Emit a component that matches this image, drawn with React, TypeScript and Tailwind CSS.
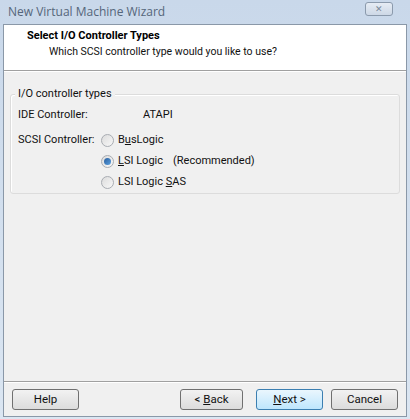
export default function App() {
  const title = { fontFamily: '"Open Sans", "Noto Sans", sans-serif' };
  const body = { fontFamily: 'Roboto, "Noto Sans", sans-serif' };

  const Radio = ({ checked }: { checked?: boolean }) => (
    <span className="relative inline-flex h-[13px] w-[13px] items-center justify-center rounded-full border border-[#a8acb2] bg-gradient-to-br from-[#dcdcdc] to-[#f8f8f8]">
      {checked && <span className="h-[7px] w-[7px] rounded-full bg-gradient-to-br from-[#2a5f9e] to-[#5aa0e0]" />}
    </span>
  );

  const Btn = ({ children, w, primary }: { children: React.ReactNode; w: string; primary?: boolean }) => (
    <button
      className={`${w} h-[21px] rounded-[3px] border text-[11.5px] text-[#111] ${
        primary
          ? "border-[#3c7fb1] bg-gradient-to-b from-[#eaf6fd] to-[#bee6fd]"
          : "border-[#707070] bg-gradient-to-b from-[#f2f2f2] to-[#dcdcdc]"
      }`}
    >
      {children}
    </button>
  );

  return (
    <div className="h-[419px] w-[410px] overflow-hidden bg-[#6f9cc0]">
      <div className="flex h-[419px] w-[410px] flex-col bg-gradient-to-b from-[#c9d8ea] to-[#dbe6f2] px-[3px] pb-[2px]">
        <div className="flex h-[24px] items-center justify-between pl-[5px] pr-[14px]" style={title}>
          <span className="text-[12px] text-[#55667a]">New Virtual Machine Wizard</span>
          <span className="mt-[-6px] flex h-[14px] w-[28px] items-center justify-center rounded-[3px] border border-[#8b9aac] bg-gradient-to-b from-[#e6ecf4] to-[#cdd8e6] text-[9px] text-[#7a8898]">
            ✕
          </span>
        </div>
        <div className="flex flex-1 flex-col border border-[#8a98a8] bg-[#f0f0f0]" style={body}>
          <div className="h-[46px] border-b border-[#a0a0a0] bg-white pl-[23px] pt-[3px]">
            <div className="text-[11px] font-bold leading-[16px] text-[#000]">Select I/O Controller Types</div>
            <div className="pl-[22px] text-[10.5px] leading-[16px] text-[#111]">Which SCSI controller type would you like to use?</div>
          </div>
          <div className="border-t border-white px-[6px] pt-[22px]">
            <div className="relative h-[100px] rounded-[3px] border border-[#dcdcdc] shadow-[inset_1px_1px_0_#fff]">
              <div className="absolute left-[4px] top-[-9px] bg-[#f0f0f0] px-[3px] text-[11px] text-[#111]">I/O controller types</div>
              <div className="pl-[7px] pt-[11px] text-[11px] text-[#111]">
                <div className="flex h-[18px] items-center">
                  <span className="w-[125px]">IDE Controller:</span>
                  <span>ATAPI</span>
                </div>
                <div className="mt-[6px] flex">
                  <span className="w-[83px] whitespace-nowrap leading-[20px]">SCSI Controller:</span>
                  <div className="flex flex-col gap-[1px] whitespace-nowrap">
                    <label className="flex h-[20px] items-center gap-[4px]">
                      <Radio />
                      <span>B<u>u</u>sLogic</span>
                    </label>
                    <label className="flex h-[20px] items-center gap-[4px]">
                      <Radio checked />
                      <span><u>L</u>SI Logic</span>
                      <span className="ml-[6px]">(Recommended)</span>
                    </label>
                    <label className="flex h-[20px] items-center gap-[4px]">
                      <Radio />
                      <span>LSI Logic <u>S</u>AS</span>
                    </label>
                  </div>
                </div>
              </div>
            </div>
          </div>
          <div className="flex-1" />
          <div className="border-t border-[#a0a0a0]">
            <div className="flex h-[34px] items-center border-t border-white px-[8px]">
              <Btn w="w-[67px]">Help</Btn>
              <div className="flex-1" />
              <Btn w="w-[63px]">&lt; <u>B</u>ack</Btn>
              <div className="w-[13px]" />
              <Btn w="w-[67px]" primary><u>N</u>ext &gt;</Btn>
              <div className="w-[8px]" />
              <Btn w="w-[67px]">Cancel</Btn>
            </div>
          </div>
        </div>
      </div>
    </div>
  );
}
